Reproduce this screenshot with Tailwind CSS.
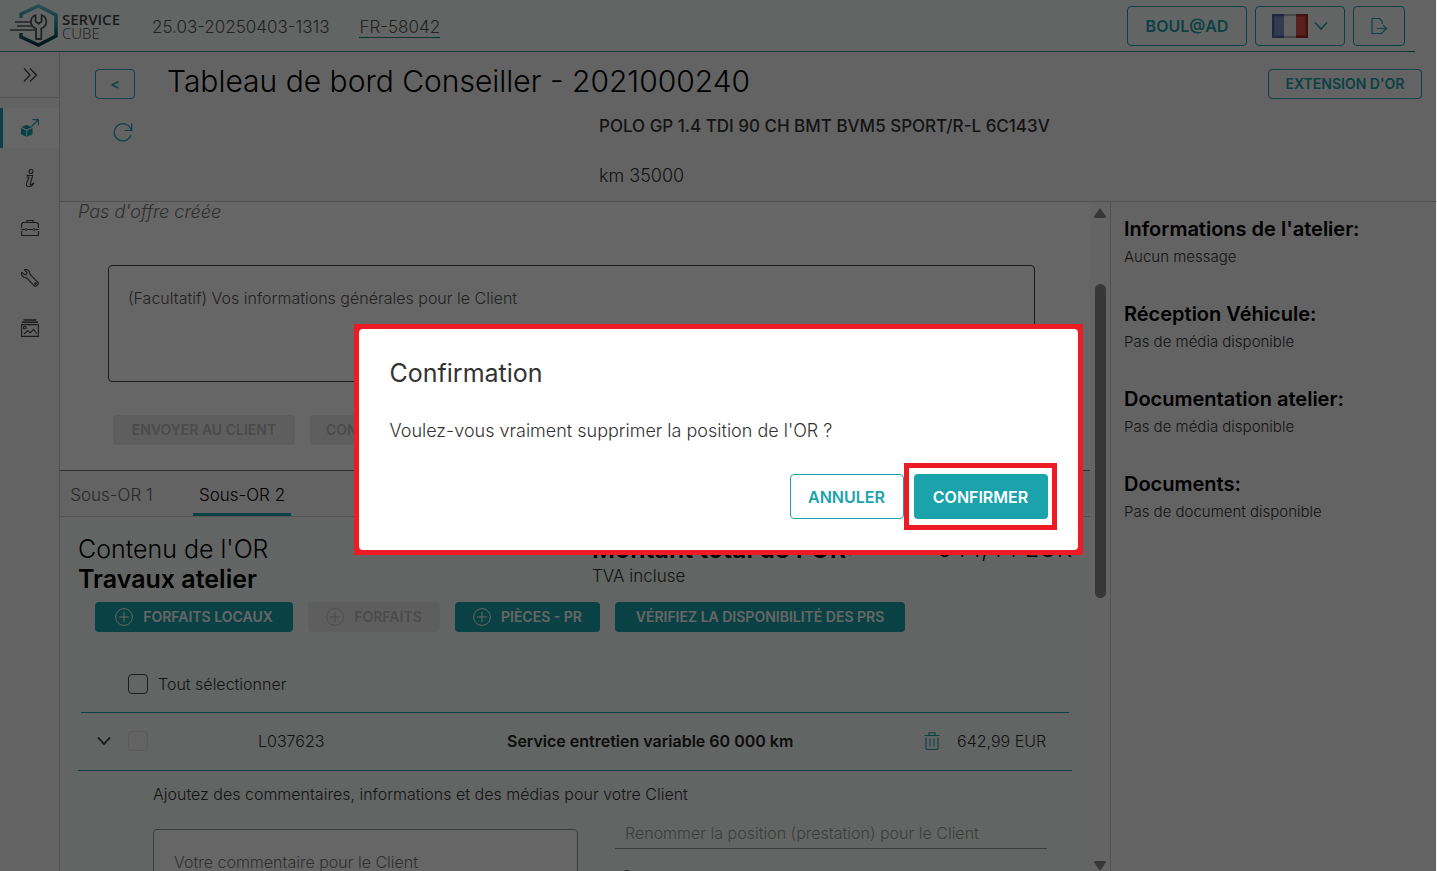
<!DOCTYPE html>
<html lang="fr">

<head>
    <meta charset="UTF-8">
    <meta name="viewport" content="width=device-width, initial-scale=1.0">
    <script src="https://cdn.jsdelivr.net/npm/@tailwindcss/browser@4"></script>
    <title>Service Cube - Tableau de bord Conseiller</title>
</head>

<body class="h-screen overflow-hidden bg-[#f7f7f7] font-['Inter',sans-serif] text-[#333]">
    <div class="flex h-full flex-col">
        <header class="mr-[22px] flex h-[52px] shrink-0 items-center border-b border-[#0f8078] bg-[#f8fcfa] pl-2 pr-2.5">
            <a href="#" class="flex w-36 items-center gap-1">
                <svg class="h-11 w-[50px] shrink-0" viewBox="0 0 50 44" fill="none">
                    <defs>
                        <linearGradient id="hex" x1="0" y1="0" x2="0" y2="1">
                            <stop offset="0" stop-color="#5cc4cf" />
                            <stop offset=".5" stop-color="#1f8791" />
                            <stop offset="1" stop-color="#05363c" />
                        </linearGradient>
                    </defs>
                    <path d="M13 14v-4L30.500 2 48 11v21L30.500 41 13 33v-4" stroke="url(#hex)" stroke-width="3.500" />
                    <path d="M7 18h18M9 22h18M2 26h25" stroke="#555" stroke-width="1.300" />
                    <path d="M28 35V24.500c-3-1.200-5-3.600-5-6.800 0-3.300 2-5.700 4.600-6.700v6.500l3 2.300 3-2.300V11c2.700 1 4.700 3.400 4.700 6.700 0 3.200-2 5.600-5 6.800V35z" fill="#f8fcfa" stroke="#555" stroke-width="1.800" stroke-linejoin="round" />
                </svg>
                <span class="flex flex-col font-['Open_Sans',sans-serif] text-[15px] leading-[14px] text-[#444]"><b class="font-semibold">SERVICE</b><span class="font-light">CUBE</span></span>
            </a>
            <span class="pt-1 text-[17px] font-light text-[#555]">25.03-20250403-1313</span>
            <a href="#" class="mt-1 ml-[30px] border-b border-[#0f8078] text-[17px] leading-5 font-light text-[#555]">FR-58042</a>
            <div class="ml-auto flex gap-2">
                <button type="button" class="h-10 w-[120px] rounded border border-[#1aa3ab] text-base font-semibold text-[#1aa3ab]">BOUL@AD</button>
                <button type="button" aria-label="Langue" class="flex h-10 w-[90px] items-center justify-center gap-1.5 rounded border border-[#1aa3ab] text-[#1aa3ab]">
                    <svg class="h-6 w-9" viewBox="0 0 36 24">
                        <path fill="#7186c4" d="M0 0h12v24H0z" />
                        <path fill="#f2f2f2" d="M12 0h12v24H12z" />
                        <path fill="#d63a33" d="M24 0h12v24H24z" />
                        <path d="M1 1h34v22H1z" fill="none" stroke="#000" stroke-opacity=".25" stroke-width="2" />
                        <path d="M3 3h30v18H3z" fill="#fff" fill-opacity=".12" />
                    </svg>
                    <svg class="size-3.5" viewBox="0 0 14 14" fill="none" stroke="currentColor" stroke-width="1.600"><path d="M1 3.500l6 6.500 6-6.500" /></svg>
                </button>
                <button type="button" aria-label="Quitter" class="flex h-10 w-[52px] items-center justify-center rounded border border-[#1aa3ab] text-[#1aa3ab]">
                    <svg class="size-[18px]" viewBox="0 0 18 18" fill="none" stroke="currentColor" stroke-width="1.200"><path d="M12 7V4L9.500 1.500H2v15h10V15M7 11.500h9M13 8l3.500 3.500L13 15" /></svg>
                </button>
            </div>
        </header>

        <div class="flex min-h-0 flex-1">
            <nav class="flex w-[60px] shrink-0 flex-col items-center border-r border-[#ccc] text-[#444]">
                <button type="button" aria-label="Ouvrir le menu" class="mb-2.5 flex h-[46px] w-full items-center justify-center border-b border-[#ccc]">
                    <svg class="size-4" viewBox="0 0 16 16" fill="none" stroke="currentColor" stroke-width="1.300"><path d="M2 1.500L8 8l-6 6.500M8 1.500L14.500 8 8 14.500" /></svg>
                </button>
                <a href="#" aria-label="Atelier" class="mb-2.5 flex h-10 w-full items-center justify-center border-l-3 border-[#1aa3ab] bg-white pr-0.5 text-[#1aa3ab]">
                    <svg class="size-[18px]" viewBox="0 0 18 18" fill="none" stroke="currentColor">
                        <path d="M5.700 5.700l5.300 2.300-5.300 2.400L.4 8zM0 9l5.300 2.400v6.300L0 15.200zM6.200 11.400L11.500 9v6.200l-5.300 2.500z" fill="currentColor" stroke="none" />
                        <path d="M10.500 7.500l7-7M11.500.6h6v6" stroke-width="1.200" />
                    </svg>
                </a>
                <a href="#" aria-label="Informations" class="mb-2.5 flex h-10 w-full items-center justify-center">
                    <svg class="size-[18px]" viewBox="0 0 18 18" fill="none" stroke="currentColor" stroke-width="1.100" stroke-linejoin="round"><circle cx="10" cy="2.500" r="2" /><path d="M5.500 6.500h6.200l-2.400 8.200c-.3 1.400 1.500 1 3.400-.7-.8 2.200-3 3.500-5 3.500-2.300 0-2.600-1.500-2-3.500L8 8H5.500" /></svg>
                </a>
                <a href="#" aria-label="Services" class="mb-2.5 flex h-10 w-full items-center justify-center">
                    <svg class="size-[18px]" viewBox="0 0 18 18" fill="none" stroke="currentColor" stroke-width="1.100"><path d="M6 3.500v-2h6v2M.6 9V5L2 3.500h14L17.400 5v4M.6 12v4.500h16.800V12M0 10.500h4M6 10.500h6M14 10.500h4M5 9v3M13 9v3" /></svg>
                </a>
                <a href="#" aria-label="Travaux" class="mb-2.5 flex h-10 w-full items-center justify-center">
                    <svg class="size-[18px]" viewBox="0 0 18 18" fill="none" stroke="currentColor" stroke-width="1.100" stroke-linejoin="round"><path d="M3.500.8C5.800-.1 9 1.500 8.800 5.200l8.600 8.600c.3 1.200-2.200 3.700-3.600 3.600L5.400 8.700C2 9.200-.2 6 .8 3.300l2.700 2.300 2-.2.400-2z" /><circle cx="14.500" cy="14.500" r=".7" /></svg>
                </a>
                <a href="#" aria-label="Médias" class="flex h-10 w-full items-center justify-center">
                    <svg class="size-[18px]" viewBox="0 0 18 18" fill="none" stroke="currentColor" stroke-width="1.100"><path d="M2.500 1h13M1 3.300h16" stroke-width="1.600" /><path d="M.6 5.600h16.800v11.800H.6zM3 15l3.800-3.500L9 14l3.500-3.500L16 14.500" /><circle cx="3.800" cy="8.500" r="1.300" /></svg>
                </a>
            </nav>

            <div class="flex min-w-0 flex-1 flex-col">
                <section class="flex h-[150px] shrink-0 border-b border-[#ccc] pl-[35px] pr-[15px] pt-[17px]">
                    <div class="flex flex-1 flex-col">
                        <div class="flex h-[30px] items-center">
                            <button type="button" class="h-[30px] w-10 rounded border border-[#1aa3ab] text-sm font-semibold text-[#1aa3ab]">&lt;</button>
                            <h1 class="ml-8 -mt-1.5 text-3xl font-light text-black">Tableau de bord Conseiller - 2021000240</h1>
                        </div>
                        <div class="mt-3 grid grid-cols-[504px_1fr] items-start">
                            <button type="button" aria-label="Actualiser" class="mt-[11px] ml-[18px] w-5 text-[#1aa3ab]">
                                <svg class="size-5" viewBox="0 0 20 20" fill="none" stroke="currentColor" stroke-width="1.200"><path d="M18.300 8.800A8.600 8.600 0 1 0 18 13M18.700 1.500v7h-7" /></svg>
                            </button>
                            <div>
                                <p class="text-[17px] leading-[30px] font-medium">POLO GP 1.4 TDI 90 CH BMT BVM5 SPORT/R-L 6C143V</p>
                                <p class="mt-5 text-lg leading-[30px] font-light">km 35000</p>
                            </div>
                        </div>
                    </div>
                    <button type="button" class="h-[30px] w-[154px] rounded border border-[#1aa3ab] text-sm font-semibold text-[#1aa3ab]">EXTENSION D'OR</button>
                </section>

                <div class="flex min-h-0 flex-1">
                    <main class="min-w-0 flex-1 overflow-hidden bg-white">
                        <p class="pl-[18px] text-lg leading-5 font-light text-[#777] italic">Pas d'offre créée</p>
                        <textarea aria-label="Vos informations générales" placeholder="(Facultatif) Vos informations générales pour le Client" class="mt-[43px] ml-12 block h-[117px] w-[calc(100%-103px)] resize-none rounded border border-[#444] px-[19px] py-5 text-base font-light placeholder:text-[#555]"></textarea>
                        <div class="mt-[33px] ml-[53px] flex gap-[15px] text-sm font-semibold text-[#bbb]">
                            <button type="button" disabled class="h-[30px] w-[182px] rounded bg-[#ececec]">ENVOYER AU CLIENT</button>
                            <button type="button" disabled class="h-[30px] rounded bg-[#ececec] px-4">CONFIRMER L'OFFRE</button>
                        </div>

                        <div class="mt-[25px] flex h-[47px] border-t border-b border-t-[#777] border-b-[#ccc] bg-[#f7f7f7] text-[17px] font-light">
                            <button type="button" class="w-[103px] pt-1 text-[#666]">Sous-OR 1</button>
                            <button type="button" class="ml-[30px] w-[98px] border-b-3 border-[#1aa3ab] pt-[7px] text-black">Sous-OR 2</button>
                        </div>

                        <section class="h-full bg-[#f8fcfa] pt-[17px] pr-[18px] pl-[18px]">
                            <div class="grid grid-cols-[514px_1fr_auto] text-black">
                                <div class="text-[25px] leading-[30px]">
                                    <h2 class="font-light">Contenu de l'OR</h2>
                                    <h2 class="font-semibold">Travaux atelier</h2>
                                </div>
                                <div>
                                    <p class="text-[25px] leading-[30px] font-semibold">Montant total de l'OR:</p>
                                    <p class="text-[17px] leading-6 font-light text-[#333]">TVA incluse</p>
                                </div>
                                <p class="text-2xl leading-[30px] font-light">644,44 EUR</p>
                            </div>

                            <div class="mt-2 ml-[17px] flex gap-[15px] text-sm font-semibold text-white">
                                <button type="button" class="flex h-[30px] w-[198px] items-center justify-center gap-2.5 rounded bg-[#1aa3ab]">
                                    <svg class="size-[18px]" viewBox="0 0 18 18" fill="none" stroke="currentColor"><circle cx="9" cy="9" r="8.400" /><path d="M9 4v10M4 9h10" /></svg>FORFAITS LOCAUX</button>
                                <button type="button" disabled class="flex h-[30px] w-[132px] items-center justify-center gap-2.5 rounded bg-[#ececec] text-[#bbb]">
                                    <svg class="size-[18px]" viewBox="0 0 18 18" fill="none" stroke="currentColor"><circle cx="9" cy="9" r="8.400" /><path d="M9 4v10M4 9h10" /></svg>FORFAITS</button>
                                <button type="button" class="flex h-[30px] w-[145px] items-center justify-center gap-2.5 rounded bg-[#1aa3ab]">
                                    <svg class="size-[18px]" viewBox="0 0 18 18" fill="none" stroke="currentColor"><circle cx="9" cy="9" r="8.400" /><path d="M9 4v10M4 9h10" /></svg>PIÈCES - PR</button>
                                <button type="button" class="h-[30px] w-[290px] rounded bg-[#1aa3ab]">VÉRIFIEZ LA DISPONIBILITÉ DES PRS</button>
                            </div>

                            <label class="mt-10 ml-[50px] flex h-6 items-center gap-2.5 text-base font-light">
                                <input type="checkbox" class="size-5 appearance-none rounded border border-[#444]">Tout sélectionner
                            </label>

                            <div class="mx-[3px] mt-4 border-t border-[#1aa3ab]"></div>
                            <div class="flex h-[58px] items-center border-b border-[#1aa3ab] pb-0.5 text-base">
                                <button type="button" aria-label="Replier" class="ml-[19px] w-3.5">
                                    <svg class="size-3.5" viewBox="0 0 14 14" fill="none" stroke="currentColor" stroke-width="1.800"><path d="M1 3.500l6 6.500 6-6.500" /></svg>
                                </button>
                                <input type="checkbox" aria-label="L037623" disabled class="ml-[17px] size-5 appearance-none rounded border border-[#eadfe2] bg-[#fbf8f9]">
                                <span class="ml-[110px] w-[249px] font-light">L037623</span>
                                <span class="flex-1 font-semibold text-[#222]">Service entretien variable 60 000 km</span>
                                <button type="button" aria-label="Supprimer" class="mr-[17px] text-[#1aa3ab]">
                                    <svg class="h-[18px] w-4" viewBox="0 0 16 18" fill="none" stroke="currentColor" stroke-width="1.100"><path d="M.5 3.500h15M5 3V.7h6V3M2 5.500v11l1 1h10l1-1v-11M6 6.500v8M10 6.500v8" /></svg>
                                </button>
                                <span class="mr-6 w-[91px] font-light whitespace-nowrap">642,99 EUR</span>
                            </div>

                            <p class="mt-[11px] ml-[75px] text-base leading-6 font-light">Ajoutez des commentaires, informations et des médias pour votre Client</p>
                            <div class="mt-[11px] mr-[25px] ml-[75px] grid grid-cols-[425px_1fr] gap-[37px]">
                                <textarea aria-label="Commentaire" placeholder="Votre commentaire pour le Client" class="mt-3 block h-[117px] resize-none rounded border border-[#999] bg-white px-5 py-5 text-base font-light placeholder:text-[#777]"></textarea>
                                <div>
                                    <input type="text" aria-label="Nom de la position" placeholder="Renommer la position (prestation) pour le Client" class="block h-8 w-full border-b border-[#999] px-2.5 text-base font-light placeholder:text-[#999]">
                                    <input type="radio" aria-label="Position" class="mt-[21px] ml-1 block size-4 appearance-none rounded-full border border-[#666]">
                                </div>
                            </div>
                        </section>
                    </main>

                    <!-- scrollbar -->
                    <div class="flex w-5 shrink-0 flex-col items-center bg-[#fafafa] pt-1.5 text-[#8a8a8a]">
                        <svg class="h-2.5 w-3" viewBox="0 0 12 10" fill="currentColor"><path d="M6 0l6 8.500-.8 1.500H.8L0 8.500z" /></svg>
                        <div class="mt-[66px] h-[314px] w-[11px] rounded-full bg-[#8a8a8a]"></div>
                        <svg class="mt-auto h-2.5 w-3 shrink-0" viewBox="0 0 12 10" fill="currentColor"><path d="M6 10l6-8.500L11.200 0H.8L0 1.500z" /></svg>
                    </div>

                    <aside class="flex w-[327px] shrink-0 flex-col gap-[29px] border-l border-[#ccc] px-[13px] pt-[13px]">
                        <div>
                            <h3 class="text-xl leading-7 font-semibold text-black">Informations de l'atelier:</h3>
                            <p class="text-[15px] leading-7 font-light">Aucun message</p>
                        </div>
                        <div>
                            <h3 class="text-xl leading-7 font-semibold text-black">Réception Véhicule:</h3>
                            <p class="text-[15px] leading-7 font-light">Pas de média disponible</p>
                        </div>
                        <div>
                            <h3 class="text-xl leading-7 font-semibold text-black">Documentation atelier:</h3>
                            <p class="text-[15px] leading-7 font-light">Pas de média disponible</p>
                        </div>
                        <div>
                            <h3 class="text-xl leading-7 font-semibold text-black">Documents:</h3>
                            <p class="text-[15px] leading-7 font-light">Pas de document disponible</p>
                        </div>
                    </aside>
                </div>
            </div>
        </div>
    </div>

    <!-- confirmation -->
    <div class="fixed inset-y-0 left-0 right-px flex items-center justify-center bg-black/60 pt-2">
        <div role="dialog" aria-labelledby="titre" class="w-[729px] border-5 border-[#ed1c24] bg-[#ed1c24]">
            <div class="rounded bg-white pt-7 pr-[21px] pb-5 pl-[31px]">
                <h2 id="titre" class="text-[25px] leading-8">Confirmation</h2>
                <p class="mt-[30px] text-lg leading-6 font-light">Voulez-vous vraiment supprimer la position de l'OR ?</p>
                <div class="mt-5 flex items-center justify-end text-base font-semibold">
                    <button type="button" class="h-[45px] w-[114px] rounded border border-[#1aa3ab] text-[#1aa3ab]">ANNULER</button>
                    <div class="border-5 border-[#ed1c24] py-1.5 pr-1 pl-[5px]">
                        <button type="button" class="block h-[45px] w-[134px] rounded bg-[#1aa3ab] text-white">CONFIRMER</button>
                    </div>
                </div>
            </div>
        </div>
    </div>
</body>

</html>
